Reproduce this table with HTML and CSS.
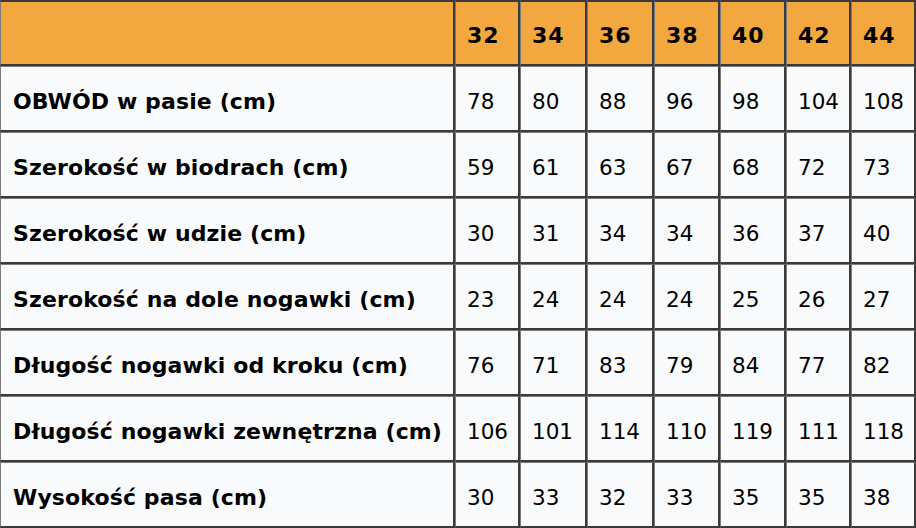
FILE: index.html
```html
<!DOCTYPE html>
<html lang="pl">
<head>
<meta charset="utf-8">
<link rel="stylesheet" href="styles.css">
</head>
<body>
<table class="sizes">
  <colgroup>
    <col class="c-label">
    <col class="c-65"><col class="c-67"><col class="c-67"><col class="c-66"><col class="c-66"><col class="c-65"><col class="c-65">
  </colgroup>
  <thead>
    <tr class="head">
      <th></th><th>32</th><th>34</th><th>36</th><th>38</th><th>40</th><th>42</th><th>44</th>
    </tr>
  </thead>
  <tbody>
    <tr><th>OBWÓD w pasie (cm)</th><td>78</td><td>80</td><td>88</td><td>96</td><td>98</td><td>104</td><td>108</td></tr>
    <tr><th>Szerokość w biodrach (cm)</th><td>59</td><td>61</td><td>63</td><td>67</td><td>68</td><td>72</td><td>73</td></tr>
    <tr><th>Szerokość w udzie (cm)</th><td>30</td><td>31</td><td>34</td><td>34</td><td>36</td><td>37</td><td>40</td></tr>
    <tr><th>Szerokość na dole nogawki (cm)</th><td>23</td><td>24</td><td>24</td><td>24</td><td>25</td><td>26</td><td>27</td></tr>
    <tr><th>Długość nogawki od kroku (cm)</th><td>76</td><td>71</td><td>83</td><td>79</td><td>84</td><td>77</td><td>82</td></tr>
    <tr><th>Długość nogawki zewnętrzna (cm)</th><td>106</td><td>101</td><td>114</td><td>110</td><td>119</td><td>111</td><td>118</td></tr>
    <tr><th>Wysokość pasa (cm)</th><td>30</td><td>33</td><td>32</td><td>33</td><td>35</td><td>35</td><td>38</td></tr>
  </tbody>
</table>
</body>
</html>
```

FILE: styles.css
```css
html, body {
  margin: 0;
  padding: 0;
  background: #ffffff;
}
.sizes {
  border-collapse: separate;
  border-spacing: 0;
  table-layout: fixed;
  width: 916px;
  font-family: "DejaVu Sans", Verdana, sans-serif;
  font-size: 21.5px;
  color: #000;
}
.c-label { width: 455px; }
.c-65 { width: 65px; }
.c-66 { width: 66px; }
.c-67 { width: 67px; }
.sizes th,
.sizes td {
  box-sizing: border-box;
  height: 66px;
  padding: 5px 0 0 11px;
  text-align: left;
  vertical-align: middle;
  background: #f9fafc;
  border-top: 1px solid #7b7b7b;
  border-left: 1px solid #7b7b7b;
  border-right: 2px solid #3a3a3a;
  border-bottom: 2px solid #3a3a3a;
  white-space: nowrap;
}
.sizes tbody th {
  font-weight: bold;
  font-size: 22px;
  letter-spacing: 0.12px;
  padding-left: 12px;
}
.sizes td {
  font-weight: normal;
}
.sizes .head th {
  background: #f2a83e;
  font-weight: bold;
  font-size: 22px;
  letter-spacing: 1px;
  padding-top: 4px;
  border-top: 2px solid #3a3a3a;
}
```
